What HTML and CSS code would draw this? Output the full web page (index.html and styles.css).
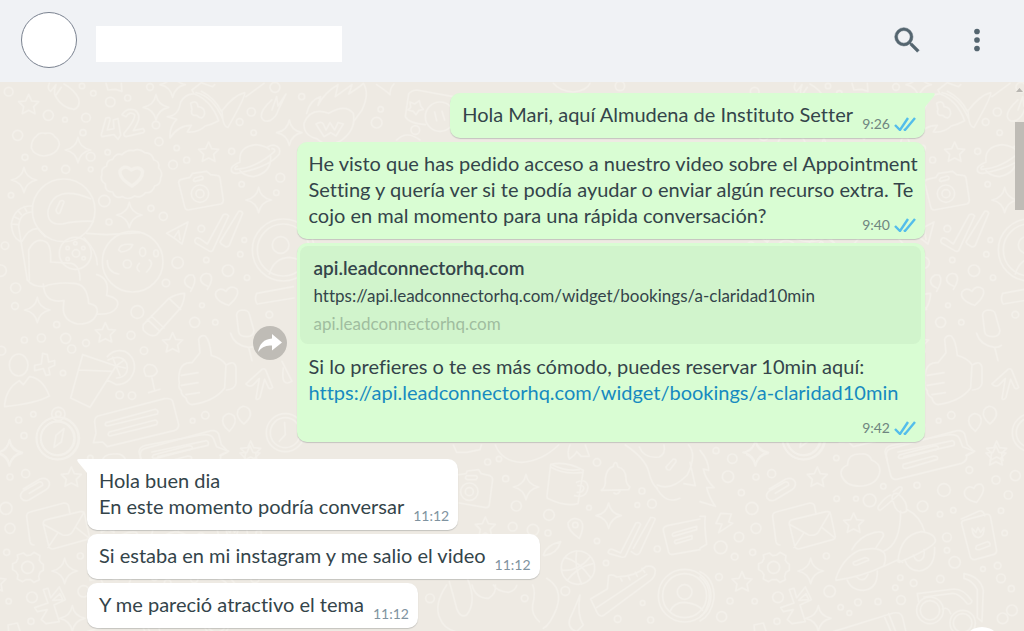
FILE: index.html
```
<!DOCTYPE html>
<html lang="es">
<head>
    <meta charset="UTF-8">
    <meta name="viewport" content="width=device-width, initial-scale=1.0">
    <title>Chat</title>
    <link rel="stylesheet" href="styles.css">
</head>
<body>
    <!-- Shared icons -->
    <svg class="defs" aria-hidden="true">
        <symbol id="check" viewBox="0 0 22 14">
            <path d="M1 8l5 5L14 1M10 12l1 1L21 1" fill="none" stroke="#53bdeb" stroke-width="2.400"/>
        </symbol>
    </svg>

    <header class="header">
        <div class="avatar"></div>
        <div class="contact-name"></div>
        <button class="icon-button" aria-label="Buscar">
            <svg width="42" height="42" viewBox="0 0 24 24"><path fill="currentColor" stroke="currentColor" stroke-width=".3" d="M15.009 13.805h-.636l-.22-.219a5.184 5.184 0 0 0 1.256-3.386 5.207 5.207 0 1 0-5.207 5.208 5.183 5.183 0 0 0 3.385-1.255l.221.22v.635l4.004 3.999 1.194-1.195-3.997-4.007zm-4.808 0a3.605 3.605 0 1 1 0-7.21 3.605 3.605 0 0 1 0 7.21z"/></svg>
        </button>
        <button class="icon-button" aria-label="Menú">
            <svg width="34" height="34" viewBox="0 0 24 24" fill="currentColor"><circle cx="12" cy="6" r="2"/><circle cx="12" cy="12" r="2"/><circle cx="12" cy="18" r="2"/></svg>
        </button>
    </header>

    <main class="chat">
        <svg class="wallpaper" aria-hidden="true">
            <defs>
                <path id="st" d="M0-32L9-12 30-10 15 5 19 26 0 16-19 26-15 5-30-10-9-12z"/>
                <path id="sp" d="M0-38Q5-7 38 0 7 6 0 38-6 7-38 0-6-6 0-38z"/>
                <g id="lower">
                    <!-- clip, cloud, letters -->
                    <path d="M208 132l50-30q20-6 28 10 2 14-10 22l-50 30q-16 8-25-5-5-12 8-22l46-26q12-2 11 10l-40 24"/>
                    <path d="M443 60q0-35 40-33 24-3 32 18 25 10 25 32-5 40-52 46-50 4-64-32-5-22 19-31z"/>
                    <path d="M555 20q2-15 20-19L740-30q30-5 38 10l10 25 36 14-24 14q2 15-15 22L590 103q-14 2-18-12z"/>
                    <path d="M598 30l106-28q14 0 10 10l-108 28q-16 2-8-10zM610 58l92-25q14 0 10 10l-92 27q-16 2-10-12z"/>
                    <path d="M240 300q-10 0-12-10l-10-75q0-12 10-14l102-27q12 0 14 10l4 22"/>
                    <path d="M268 238q-2-12 10-14l100-24q12-2 14 8l14 66q0 8-8 10l-102 28q-10 0-12-10zM268 238l58 32q20 4 30-10l34-58M282 308l28-42M366 248l38 30"/>
                    <path d="M62 205l32 2-8 24 12 4-42 28 10-26-18-2z"/>
                    <!-- scooter -->
                    <path d="M408 400q20-60 70-84 60-14 76 10 6 20-4 38-60 30-142 42zM456 314q20-40 68-52 30-6 26 12l-22 34M460 352l34-14q12 0 12 8l-36 14q-12 2-10-8zM440 400q10 36 50 36 44-4 42-58M470 396q20 20 34-8M552 364l42-20 14 8M552 318q50-20 50-120M594 350q6-80 70-90 44 6 42 30-10 20-108 62zM614 344q10 32 44 34 48-8 46-70M640 330q8 22 22 16 14-8 10-32M674 260q-14-48-52-66M576 160q0-18 18-14 30 24 26 52-20 14-34-10zM580 140l18-14q10-2 8 8l-12 16q-44 40-54 46-10-4-4-14 20-26 36-32"/>
                    <!-- passport and heart -->
                    <path d="M786 240q-4-12 6-14l66-18q12-2 14 10l18 98q0 10-8 12l-58 16q-12 0-14-12zM784 222l54-24q12-2 16 14M816 250q2 26 20 28 18-6 16-30l-10 14-8-14-6 14zM830 302l32-12q10 2 8 12l-32 12q-16 2-8-12z"/>
                    <path d="M830 172q-42-10-36-34 10-20 28-8 6-16 22-12 18 14-14 54z"/>
                    <!-- gear -->
                    <path d="M208 324l10 8 12-2 10-8 18 10-2 14 6 8 6 4v18l-10 6-4 12 2 10-16 8-10-8h-14l-10 6-16-8 2-12-6-10-10-6v-18l10-4 6-12-2-10z"/>
                    <circle cx="221" cy="367" r="18"/>
                    <path d="M268 434l14-4 8 28 26-32 18 38-34 16 16 50-40 6-14-12 18-30-30 6-8-12 40-14zM296 466l22-20 8 18z"/>
                    <!-- glasses, paw, box -->
                    <circle cx="690" cy="496" r="40"/><circle cx="690" cy="496" r="29"/>
                    <circle cx="788" cy="534" r="38"/><circle cx="788" cy="534" r="28"/>
                    <path d="M656 470l-4-24 110-14q30 0 54 36-4 12-14 8-28-36-50-30l-80 10M792 386q50 10 58 50l-4 94-14-12v-84q-14-28-40-34zM728 492q16-8 24 14"/>
                    <path d="M400 560l180-56q24-4 28 14l14 60M552 512l26 60M566 506l26 66M164 560l-2-20 28-6 8 24"/>
                    <circle cx="908" cy="520" r="16"/><circle cx="936" cy="496" r="16"/>
                    <circle cx="310" cy="-20" r="63"/><circle cx="310" cy="-20" r="50"/>
                    <path d="M0 380q44 20 42 80-8 50-42 68M0 396q30 20 28 64-6 40-28 56M0 16q26 30 26 60l-16-4q6 30 32 56H20q8 30 26 56l-46-14M0 214h16q-4 20 4 84l-20 12"/>
                    <use href="#st" x="352" y="98"/><use href="#st" x="888" y="34"/><use href="#st" x="461" y="236"/><use href="#st" x="126" y="412"/>
                    <use href="#sp" x="167" y="22"/><use href="#sp" x="332" y="378"/><use href="#sp" x="355" y="520"/>
                    <g>
                        <circle cx="48" cy="17" r="9"/><circle cx="97" cy="41" r="14"/><circle cx="84" cy="95" r="17"/><circle cx="168" cy="96" r="9"/>
                        <circle cx="215" cy="86" r="12"/><circle cx="124" cy="143" r="9"/><circle cx="156" cy="190" r="18"/><circle cx="168" cy="250" r="15"/>
                        <circle cx="117" cy="276" r="14"/><circle cx="62" cy="307" r="19"/><circle cx="104" cy="335" r="10"/><circle cx="158" cy="322" r="9"/>
                        <circle cx="379" cy="333" r="9"/><circle cx="57" cy="396" r="10"/><circle cx="234" cy="457" r="16"/><circle cx="389" cy="439" r="17"/>
                        <circle cx="90" cy="468" r="9"/><circle cx="164" cy="469" r="8"/><circle cx="65" cy="515" r="15"/><circle cx="231" cy="529" r="9"/>
                        <circle cx="409" cy="39" r="8"/><circle cx="550" cy="124" r="8"/><circle cx="651" cy="121" r="9"/><circle cx="732" cy="135" r="19"/>
                        <circle cx="410" cy="161" r="8"/><circle cx="509" cy="166" r="19"/><circle cx="468" cy="161" r="7"/><circle cx="668" cy="184" r="16"/>
                        <circle cx="720" cy="208" r="8"/><circle cx="760" cy="196" r="8"/><circle cx="741" cy="277" r="13"/><circle cx="741" cy="316" r="8"/>
                        <circle cx="764" cy="352" r="17"/><circle cx="601" cy="398" r="8"/><circle cx="641" cy="414" r="10"/><circle cx="721" cy="402" r="11"/>
                        <circle cx="586" cy="428" r="8"/><circle cx="603" cy="465" r="13"/><circle cx="534" cy="470" r="9"/><circle cx="474" cy="472" r="10"/>
                        <circle cx="422" cy="487" r="8"/><circle cx="448" cy="504" r="7"/><circle cx="808" cy="75" r="10"/><circle cx="888" cy="105" r="12"/>
                        <circle cx="946" cy="92" r="15"/><circle cx="925" cy="150" r="12"/><circle cx="903" cy="197" r="8"/><circle cx="914" cy="264" r="8"/>
                        <circle cx="893" cy="362" r="10"/><circle cx="903" cy="400" r="13"/><circle cx="934" cy="431" r="9"/><circle cx="849" cy="372" r="7"/>
                    </g>
                </g>
                <pattern id="doodles" width="746" height="620" patternUnits="userSpaceOnUse">
                    <g class="doodle" transform="translate(0 -2) scale(.3333)">
                        <!-- 42, rocket, planet -->
                        <path d="M318 114q14-4 12 6l-8 30 20-4-2-26 14-4 8 50-8 12-12-14-36 6q-4-4 0-14zM366 104q14-22 38-14 22 14 6 44l-10 18 30-6q6 8 0 12l-52 12q-8-2-6-10 34-40 32-56-14-12-26 6z"/>
                        <path d="M510 174q-2-34 20-56l-28-8q34-2 40-44 16-26 42-24 50 20 72 80-22 12-40 16-20 20-54 18l12-20q-40 0-64 38zM582 42l-6-12 28-22 34 12 6-6M588 38q50 10 80 78M604 34q40 20 60 60M572 70q20-12 22 10 20 2 20 20-6 24-24 6-20 2-14-18zM668 90q34-44 66-52 4 10-50 104-16 0-18-52zM738 50l54-40"/>
                        <path d="M720 246q-6-46 48-52 30 4 40 14M812 228q4 50-52 62-30-4-40-18M720 246q-30 12-26 26 6 14 36 4 80-18 108-54 6-20-14-26-8-2-20 4M712 258q-10 4-6 10 60-2 118-54 2-8-8-8"/>
                        <path d="M148 10q-8 16 4 24l16-20q-8 22-2 34l18-26M166 48q20 36 56 40 20-6 14-32-14-28-44-44M816 60q-34 30-32 50 6 18 26 12 20-12 24-30l24-50-24 36-4-28-14 40M110 168q6-12 26-8 20-4 28 10 14 8 14 24-6 30-46 34-30-2-38-24 0-26 16-36z"/>
                        <!-- badge -->
                        <path d="M320 258q0-18 18-20 10-20 28-14 16-16 34-12 18-8 34 6 22 0 28 22 18 4 14 24 14 14 6 30 0 20-18 24-6 22-28 20-14 18-32 10-20 14-36 2-24 8-30-14-24 0-22-24-18-12-10-28-4-20 14-26z"/>
                        <path stroke-width="10" d="M396 318q-40-24-36-46 14-20 34-2 24-14 34 4 0 24-32 44z"/>
                        <!-- camera -->
                        <path d="M536 308q0-8 8-10l26-6 8-12 42-6 12 10 18 2q8 0 10 8l10 66q0 10-8 12l-98 18q-8 0-10-10zM584 294l20-6q8 2 4 10l-22 6q-10 0-2-10z"/>
                        <circle cx="600" cy="341" r="26"/><circle cx="600" cy="341" r="12"/>
                        <!-- astronaut -->
                        <circle cx="191" cy="391" r="94"/><path d="M272 356q-110-44-128 36-4 44 44 40 40-10 92-8M168 390l12-26q8-6 12 2l-12 32q-8 8-12-8zM94 378q-50 0-60 54 2 40 26 52M94 396q-36 4-38 44l6 38M66 484q20-40 48-38l22 24M62 478l20 122M88 600l-2-90q20-40 52-24 16 10 14 60l62 4q26 6 26 50M260 460l60 4 100-6M252 474q40 40 40 80M36 432l18 2M42 410l16 8M54 392l10 12M72 380l8 14"/>
                        <circle cx="226" cy="520" r="48"/><circle cx="228" cy="520" r="11"/><circle cx="203" cy="504" r="5"/><circle cx="226" cy="490" r="5"/><circle cx="250" cy="504" r="5"/><circle cx="251" cy="535" r="5"/><circle cx="203" cy="537" r="5"/>
                        <!-- moon, triangle, ticks, contact -->
                        <circle cx="398" cy="545" r="91"/><circle cx="382" cy="552" r="12"/><ellipse cx="428" cy="516" rx="9" ry="13"/><ellipse cx="468" cy="520" rx="7" ry="10"/><path d="M356 510q4-22 42-16-6 18-34 22zM322 542q0 34 34 40M448 540q16 10-8 36M418 550q-14 14 0 24"/>
                        <path d="M500 460l64-34-18 66-18-14zM524 470l12-18 4 26M586 478q4-8 14-2l22 16 48-88q10-4 16 4l-48 104q-4 4-12 0l-38-22q-6-6-2-12zM660 486l56-92q10-2 12 6l-40 96q-4 6-12 4l-12-8z"/>
                        <circle cx="850" cy="510" r="93"/><circle cx="850" cy="510" r="78"/><circle cx="842" cy="495" r="25"/><path d="M808 582q14-48 60-50 40 4 50 30"/>
                        <use href="#st" x="86" y="75"/><use href="#st" x="626" y="218"/><path d="M318 10l6 20 22-2 20 6-2-24"/>
                        <use href="#sp" x="234" y="210"/><use href="#sp" x="72" y="300"/><use href="#sp" x="468" y="82"/><use href="#sp" x="388" y="405"/><use href="#sp" x="868" y="158"/><use href="#sp" x="776" y="360"/><use href="#sp" x="518" y="14"/>
                        <circle cx="26" cy="35" r="13"/><circle cx="246" cy="18" r="8"/><circle cx="280" cy="40" r="8"/><circle cx="331" cy="66" r="14"/><circle cx="383" cy="54" r="9"/><circle cx="450" cy="21" r="10"/>
                        <circle cx="145" cy="106" r="15"/><circle cx="258" cy="113" r="13"/><circle cx="195" cy="119" r="7"/><circle cx="53" cy="166" r="15"/><circle cx="249" cy="158" r="9"/><circle cx="75" cy="232" r="9"/>
                        <circle cx="272" cy="230" r="13"/><circle cx="323" cy="217" r="8"/><circle cx="197" cy="268" r="12"/><circle cx="134" cy="265" r="7"/><circle cx="272" cy="268" r="7"/><circle cx="33" cy="346" r="8"/>
                        <circle cx="468" cy="135" r="11"/><circle cx="477" cy="185" r="12"/><circle cx="530" cy="204" r="8"/><circle cx="519" cy="254" r="13"/><circle cx="560" cy="240" r="9"/><circle cx="313" cy="363" r="17"/>
                        <circle cx="453" cy="385" r="9"/><circle cx="490" cy="409" r="12"/><circle cx="327" cy="426" r="9"/><circle cx="604" cy="446" r="10"/><circle cx="533" cy="548" r="17"/><circle cx="619" cy="540" r="8"/>
                        <circle cx="684" cy="572" r="17"/><circle cx="733" cy="480" r="7"/><circle cx="721" cy="523" r="8"/><circle cx="15" cy="497" r="11"/><circle cx="2" cy="572" r="17"/><circle cx="695" cy="214" r="9"/>
                        <circle cx="754" cy="96" r="12"/><circle cx="719" cy="126" r="10"/><circle cx="825" cy="22" r="15"/><circle cx="725" cy="313" r="8"/><circle cx="841" cy="293" r="13"/><circle cx="829" cy="338" r="8"/><circle cx="761" cy="158" r="8"/>
                    </g>
                    <g class="doodle" transform="translate(0 178) scale(.3333)">
                        <path d="M82 60q14 20 50 20 30-14 90-10 40 2 44 60 28 4 26 26-10 38-60 36-44-10-42-50l2-20q-60 10-62-50M290 44q40 10 30 62 44 10 30 36-14 24-60 20"/>
                        <!-- pencil, quotes, heart -->
                        <path d="M430 194l76-78q20-14 48-16-2 28-14 46l-70 78q-20 10-40-14-2-10 0-16zM442 178l38 36M454 168l38 36M508 116l34 32M572 84q-20-8-18-24 8-20 26-14 12 16-8 48M622 78q-22-8-20-24 8-18 26-12 16 12-6 46M686 136q-46-16-38-40 12-16 30-2 12-20 32-8 12 20-24 50zM770 100l110-20M772 132l110-18M770 100q-8 20 2 32"/>
                        <!-- mic, thumb, arrow -->
                        <path d="M710 166q0-14 16-16 20 0 22 12l14 50q-2 18-22 18-22 0-24-14zM692 220q10 36 54 42 14 0 20-6M746 262l10 40M540 330q8-24 36-22l24-30-4-40q6-14 20-10 14 14 18 58 30 8 44 28l-4 70q-30 40-98 50-14-2-18-20-16-10-14-22-10-8-6-24-4-14 2-38zM544 346l50-8M544 376l50-8M558 404l40-6M680 314q24-14 28 8v48q-4 18-28 20M738 372l48-44q8-4 12 4l20 50q-6 6-12 2l-12-26-14 54q-6 10-12 4l10-60-20 20q-12 6-20-4z"/>
                        <!-- drink, person -->
                        <path d="M248 284l100 34-78 124-58-28zM236 330l100 4M322 290q20-24 52-16 36 20 28 60-14 40-52 40l-28-14M324 300q40-20 56 10 10 40-30 44M348 318l-10-26M348 318l22-16M348 318l28 6M348 318l12 28M438 348q-14-24 4-34 24-4 30 20-8 20-34 14zM456 354l8 38M446 398l34-10"/>
                        <ellipse cx="56" cy="315" rx="28" ry="33"/><path d="M14 434q4-48 44-72l12 12 18-24q40 4 60 58-40 22-134 32zM104 316l20-4 4-32 14 4 4 22 18-4v14l-18 8 4 20-12 2-8-20-26 6z"/>
                        <!-- compass, notes, alarm -->
                        <circle cx="174" cy="535" r="64"/><circle cx="174" cy="535" r="51"/><circle cx="175" cy="462" r="20"/><circle cx="175" cy="462" r="8"/><path d="M162 562l6-36 24-20-8 40z"/>
                        <path d="M284 486q0-14 10-18l200-52q20-2 24 8l18 70q0 14-14 18l-200 48-14-14-28 2 8-28zM318 488l148-40q12 4 6 14l-150 36q-10-2-4-10zM328 516l138-36q10 4 4 14l-140 34q-10-2-2-12zM424 600q-10-28 10-34l200-54q16-2 22 10l8 32 20 20-24 12M456 576l164-34q8 4 4 14l-150 34"/>
                        <circle cx="856" cy="518" r="57"/><circle cx="856" cy="518" r="45"/><path d="M854 488l2 36-18 20M688 514q-26-20-18-42 14-20 32-4 12 20-14 46M732 492q-26-20-18-42 14-20 32-4 16 20-14 46M846 304l30 60q-34 20-26-40"/>
                        <use href="#st" x="316" y="220"/><use href="#st" x="518" y="250"/><use href="#st" x="752" y="575"/><use href="#sp" x="112" y="150"/><use href="#sp" x="28" y="580"/>
                        <circle cx="47" cy="84" r="15"/><circle cx="45" cy="138" r="10"/><circle cx="170" cy="194" r="9"/><circle cx="197" cy="235" r="15"/><circle cx="124" cy="234" r="12"/><circle cx="73" cy="240" r="9"/>
                        <circle cx="215" cy="267" r="12"/><circle cx="258" cy="249" r="10"/><circle cx="393" cy="226" r="12"/><circle cx="412" cy="156" r="19"/><circle cx="432" cy="272" r="11"/><circle cx="584" cy="187" r="15"/>
                        <circle cx="646" cy="187" r="8"/><circle cx="606" cy="136" r="7"/><circle cx="498" cy="69" r="11"/><circle cx="741" cy="53" r="8"/><circle cx="808" cy="164" r="10"/><circle cx="359" cy="405" r="11"/>
                        <circle cx="396" cy="407" r="11"/><circle cx="189" cy="339" r="8"/><circle cx="56" cy="480" r="9"/><circle cx="100" cy="463" r="8"/><circle cx="72" cy="527" r="9"/><circle cx="616" cy="466" r="11"/><circle cx="578" cy="482" r="7"/><circle cx="4" cy="272" r="13"/>
                    </g>
                    <g class="doodle" transform="translate(-46 363) scale(.3333)"><use href="#lower"/></g>
                    <g class="doodle" transform="translate(700 363) scale(.3333)"><use href="#lower"/></g>
                    <g class="doodle" transform="translate(380 363) scale(.3333)">
                        <!-- camera, mug, bell -->
                        <path d="M230 90l28-4 4-8 34-4 8 12 26 6q8 4 8 12l-10 76q-2 8-10 8l-80-14M260 92h28q8 4 0 12h-26q-10-4-2-12z"/>
                        <circle cx="268" cy="140" r="26"/><circle cx="268" cy="140" r="12"/>
                        <path d="M512 58q50-10 98 18l-16 100q-40 10-92-16-2-8 0-16zM512 66q40 24 96 16M518 60q40 20 80 14M590 112q30-14 34 14-4 36-40 26M594 122q16-4 18 8-4 14-20 12M664 136q14-8 12-36 4-30 24-36 2-14 10-10l4 12q24 6 24 34 0 18 12 26l-4 8zM702 144q10 8 18-6"/>
                        <!-- pin, ticks, paper -->
                        <path d="M598 280q-36-24-34-46 12-20 34-10 20 12 0 56z"/><circle cx="586" cy="240" r="8"/>
                        <path d="M686 318q4-8 14-4l22 10 46-90q10-4 14 4l-46 96q-4 4-12 2l-36-10q-6-4-2-8zM760 310l52-92q10-2 14 4l-46 100q-6 10-14 6l-12-8M960 222l-98 20q-14 4-12 14l16 66q4 8 12 6l82-14M880 264l70-20v10l-70 20q-6-4 0-10zM886 286l50-14v10l-48 14q-8-4-2-10z"/>
                        <!-- ball, shoe, contact -->
                        <circle cx="594" cy="368" r="50"/><path d="M556 338q40 10 76 60M590 318q-8 50 14 98M546 376q50 4 84-40M562 406q30-40 76-50"/>
                        <path d="M632 462l50-30 4-40q10-6 24 4 60-2 88-32 24-4 28 12 0 20-14 30L670 512q-12 4-18-8zM650 488l150-100M720 396l6 12M744 392l6 12M766 382l6 12M786 370l8 12"/>
                        <circle cx="914" cy="452" r="79"/><circle cx="914" cy="452" r="66"/><circle cx="914" cy="441" r="22"/><path d="M870 500q10-28 44-28 40 4 54 24"/>
                        <path d="M346 0q20 50 80 52 60-4 110-52M220 0l10 22 30 0 40-8 4-14M570 0q-10 20-2 42 20-14 22-22l14 14 24 0-12-34M736 0q60 40 70 80 10 40 26 50M778 6q14 36 60 30 20-10 14-36M832 120q40 20 90-30 30-60 4-90M858 66l22-24q10 0 8 8l-18 24q-10 4-12-8zM930 52l16 70-34-6M830 130q30 50 70 30"/>
                        <path d="M490 330q10-30 52-40-10 36-50 42M276 420q10 40 50 40 24-14 20-40M340 420q10 20 46 22 20-6 24-20M200 420q-40 60-20 100 10 30 46 40M262 400q30 70-2 110-20 10-30-20-10-40-22-80M458 420q10 20 0 60-4 30 20 50M500 400q50 30 30 90-20 50-40 60M600 450q-20 50-30 70-10 30 20 40l20-20q-20-30-10-90z"/>
                        <use href="#st" x="316" y="248"/><use href="#sp" x="438" y="126"/><use href="#sp" x="686" y="212"/>
                        <circle cx="323" cy="51" r="9"/><circle cx="357" cy="42" r="8"/><circle cx="377" cy="101" r="9"/><circle cx="409" cy="183" r="15"/><circle cx="507" cy="210" r="16"/><circle cx="398" cy="245" r="13"/><circle cx="459" cy="255" r="17"/>
                        <circle cx="504" cy="264" r="9"/><circle cx="651" cy="52" r="11"/><circle cx="627" cy="188" r="7"/><circle cx="651" cy="288" r="8"/><circle cx="678" cy="354" r="8"/><circle cx="556" cy="438" r="13"/><circle cx="786" cy="138" r="9"/>
                        <circle cx="816" cy="176" r="13"/><circle cx="772" cy="180" r="7"/><circle cx="832" cy="312" r="9"/><circle cx="788" cy="474" r="7"/><circle cx="713" cy="522" r="10"/><circle cx="812" cy="525" r="9"/><circle cx="150" cy="460" r="13"/><circle cx="434" cy="460" r="10"/>
                    </g>
                    <g class="doodle" transform="translate(290 -2) scale(.3333)">
                        <path d="M50 100q10-40 42-50l-8 26q20-40 60-62l-8 36 50-36q-4 16-10 28 34-22 44-32 20 30-4 80l-26 36M42 130q20-50 74-30 50-30 74 0 10 50-40 84-40 20-70-8-40-10-38-46zM78 132q16-10 22 0l8 18 12-22 14 22 10-22 16 4-22 36-16-10-20 12z"/>
                        <path d="M260 14q30 20 40 30 0-20 12-32M346 110l10-68q6-10 24-12l110 20M346 110q10 20 60 24M360 66l14 6 14-10 4 16 8 10-14 4-8 12-8-10-16-4 8-8zM790 10q20 24 60 26 40-4 50-26"/>
                        <circle cx="450" cy="110" r="44"/><path d="M434 96l6 26M456 94l8 26M320 180q30-30 70 0"/>
                        <circle cx="35" cy="50" r="9"/><circle cx="272" cy="88" r="8"/><circle cx="260" cy="128" r="16"/><circle cx="376" cy="150" r="13"/><circle cx="990" cy="18" r="14"/>
                    </g>
                </pattern>
            </defs>
            <rect width="100%" height="100%" fill="url(#doodles)"/>
        </svg>

        <div class="messages">
            <div class="row out first">
                <div class="bubble">
                    <svg class="tail" width="10" height="14" viewBox="0 0 10 14"><path d="M0 0h8q3 0 1 3L0 14z" fill="#d9fdd3"/></svg>
                    <p class="text">Hola Mari, aquí Almudena de Instituto Setter<span class="spacer"></span></p>
                    <div class="meta">9:26 <svg class="ticks"><use href="#check"/></svg></div>
                </div>
            </div>
            <div class="row out">
                <div class="bubble">
                    <p class="text">He visto que has pedido acceso a nuestro video sobre el Appointment Setting y quería ver si te podía ayudar o enviar algún recurso extra. Te cojo en mal momento para una rápida conversación?<span class="spacer"></span></p>
                    <div class="meta">9:40 <svg class="ticks"><use href="#check"/></svg></div>
                </div>
            </div>
            <div class="row out">
                <button class="forward" aria-label="Reenviar">
                    <svg width="24" height="20" viewBox="0 0 24 20"><path d="M14 1l10 8.500-10 8v-5Q5 11.500 0 19 2 6.500 14 5.500z" fill="#fff"/></svg>
                </button>
                <div class="bubble">
                    <div class="preview">
                        <div class="preview-title">api.leadconnectorhq.com</div>
                        <div class="preview-desc">https://api.leadconnectorhq.com/widget/bookings/a-claridad10min</div>
                        <div class="preview-domain">api.leadconnectorhq.com</div>
                    </div>
                    <p class="text">Si lo prefieres o te es más cómodo, puedes reservar 10min aquí:<br><a href="#">https://api.leadconnectorhq.com/widget/bookings/a-claridad10min</a> <span class="spacer"></span></p>
                    <div class="meta">9:42 <svg class="ticks"><use href="#check"/></svg></div>
                </div>
            </div>
            <div class="row in first">
                <div class="bubble">
                    <svg class="tail" width="10" height="14" viewBox="0 0 10 14"><path d="M10 0H2Q-1 0 1 3l9 11z" fill="#fff"/></svg>
                    <p class="text">Hola buen dia<br>En este momento podría conversar<span class="spacer"></span></p>
                    <div class="meta">11:12</div>
                </div>
            </div>
            <div class="row in">
                <div class="bubble">
                    <p class="text">Si estaba en mi instagram y me salio el video<span class="spacer"></span></p>
                    <div class="meta">11:12</div>
                </div>
            </div>
            <div class="row in">
                <div class="bubble">
                    <p class="text">Y me pareció atractivo el tema<span class="spacer"></span></p>
                    <div class="meta">11:12</div>
                </div>
            </div>
        </div>

        <div class="scrollbar">
            <svg width="9" height="4" viewBox="0 0 9 4"><path d="M4.500 0L8 4H1z" fill="#b9b6b1"/></svg>
            <div class="thumb"></div>
        </div>
        <button class="scroll-down" aria-label="Ir al final"></button>
    </main>
</body>
</html>
```
FILE: styles.css
```
* {
    box-sizing: border-box;
}

body {
    display: flex;
    flex-direction: column;
    height: 100vh;
    margin: 0;
    overflow: hidden;
    font-family: Lato, "Open Sans", sans-serif;
    font-variant-ligatures: none;
    color: #34444a;
}

button {
    padding: 0;
    border: none;
    background: none;
    cursor: pointer;
}

.defs {
    position: absolute;
    width: 0;
    height: 0;
}

.header {
    display: flex;
    align-items: center;
    flex-shrink: 0;
    height: 82px;
    padding: 0 30px 2px 21px;
    background-color: #f0f2f5;
}

.avatar {
    width: 56px;
    height: 56px;
    margin-right: 19px;
    border: 1px solid #7a8290;
    border-radius: 50%;
    background-color: #fff;
}

.contact-name {
    width: 246px;
    height: 36px;
    margin: 8px auto 0 0;
    background-color: #fff;
}

.icon-button {
    display: flex;
    margin-left: 32px;
    color: #54656f;
}

.chat {
    position: relative;
    display: flex;
    flex: 1;
    min-height: 0;
    overflow: hidden;
    background-color: #eeeae3;
}

.wallpaper {
    position: absolute;
    width: 100%;
    height: 100%;
}

.doodle {
    fill: none;
    stroke: #f3f0ea;
    stroke-width: 5;
    stroke-linejoin: round;
    stroke-linecap: round;
}

.messages {
    position: relative;
    display: flex;
    flex: 1;
    flex-direction: column;
    gap: 4px;
    padding: 11px 90px 0 87px;
}

.row {
    display: flex;
    align-items: center;
    gap: 10px;
}

.out {
    justify-content: flex-end;
}

.row + .first {
    margin-top: 13px;
}

.bubble {
    position: relative;
    max-width: 75%;
    padding: 8px 6px 11px 12px;
    border-radius: 10px;
    background-color: #fff;
    box-shadow: 0 1px 1px rgba(11, 20, 26, 0.18);
}

.out .bubble {
    background-color: #d9fdd3;
}

.out.first .bubble {
    border-top-right-radius: 0;
}

.in.first .bubble {
    border-top-left-radius: 0;
}

.tail {
    position: absolute;
    top: 0;
}

.out .tail {
    left: 100%;
}

.in .tail {
    right: 100%;
}

.text {
    margin: 0;
    font-size: 20px;
    line-height: 26px;
}

.text a {
    color: #168ac0;
    text-decoration: none;
}

.spacer {
    display: inline-block;
    width: 66px;
    height: 1px;
}

.in .spacer {
    width: 48px;
}

/* Time sits in the corner, beside the end of the text */
.meta {
    position: absolute;
    right: 9px;
    bottom: 4px;
    display: flex;
    align-items: center;
    gap: 4px;
    font-size: 14px;
    line-height: 20px;
    color: #6f8580;
}

.in .meta {
    color: #8093a0;
}

.ticks {
    width: 22px;
    height: 14px;
}

.preview {
    margin: -5px -2px 9px -9px;
    padding: 8px 14px 6px;
    border-radius: 8px;
    background-color: #d1f4cc;
    line-height: 28px;
}

.preview-title {
    font-size: 19px;
    font-weight: 600;
}

.preview-desc {
    font-size: 17px;
}

.preview-domain {
    font-size: 17px;
    color: #a0bd9f;
}

.forward {
    display: flex;
    align-items: center;
    justify-content: center;
    width: 34px;
    height: 34px;
    border-radius: 50%;
    background-color: #bfbcb6;
}

.scrollbar {
    position: relative;
    width: 9px;
    padding-top: 6px;
}

.scrollbar svg {
    display: block;
}

.thumb {
    height: 88px;
    margin-top: 30px;
    background-color: #bfbcb6;
}

.scroll-down {
    position: absolute;
    right: 22px;
    bottom: -36px;
    width: 40px;
    height: 40px;
    border-radius: 50%;
    background-color: #fff;
}
```
